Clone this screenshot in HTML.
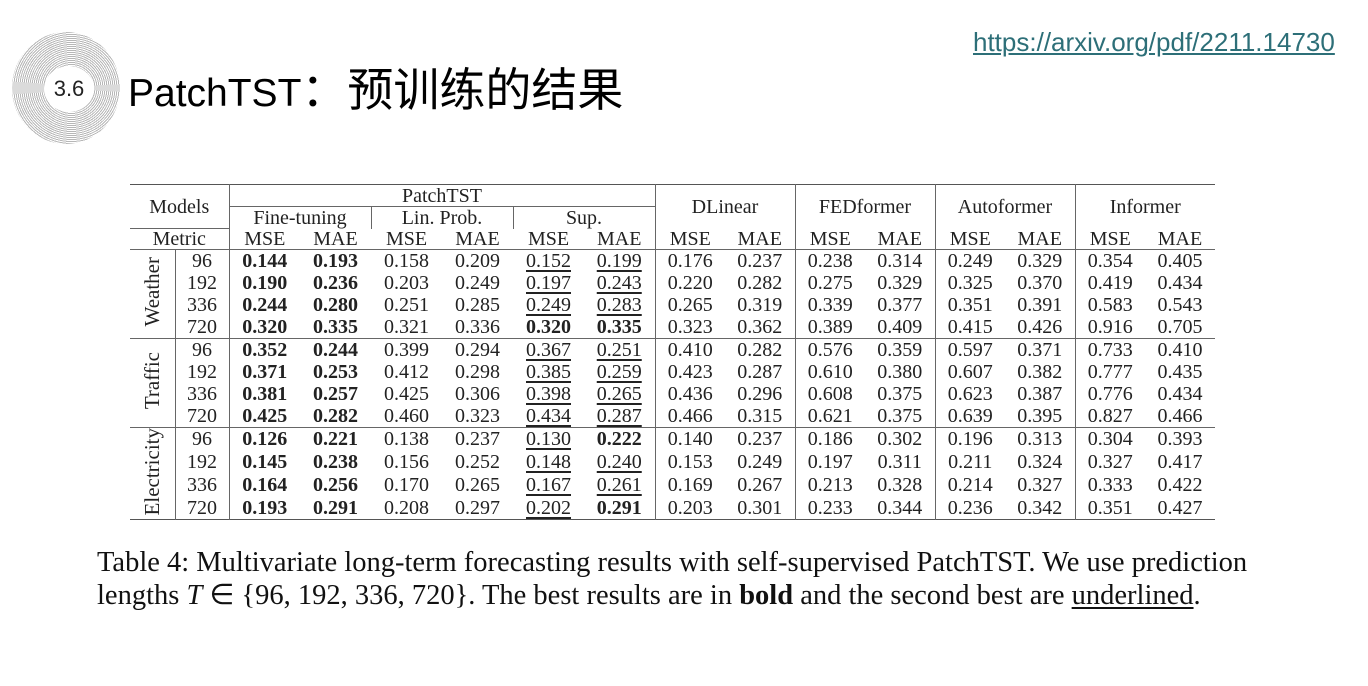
<!DOCTYPE html>
<html><head><meta charset="utf-8"><style>
*{margin:0;padding:0;box-sizing:border-box}
body{width:1368px;height:686px;background:#fff;position:relative;overflow:hidden;font-family:"Liberation Serif",serif;color:#222}
.logo{position:absolute;left:12px;top:32px;width:108px;height:112px;border-radius:50%;background:repeating-radial-gradient(circle at 55% 50%,#fff 0 1px,#aaa 1px 2px);opacity:.85}
.inner{position:absolute;left:44px;top:66px;width:50px;height:46px;border-radius:50%;background:#fff;font:22px "Liberation Sans",sans-serif;color:#222;text-align:center;line-height:46px}
.title{position:absolute;left:128px;top:54px;font:39px "Liberation Sans",sans-serif;color:#000}
.title span{font:46px "Noto Sans CJK SC",sans-serif;position:relative;top:0px}
.url{position:absolute;left:973px;top:27px;font:26px "Liberation Sans",sans-serif;color:#2d6f78;text-decoration:underline}
table{position:absolute;left:130px;top:184px;border-collapse:collapse;table-layout:fixed;font-size:20px;border-top:1.5px solid #555;border-bottom:1.5px solid #555}
td{text-align:center;padding:0;height:22.2px;line-height:20px;white-space:nowrap}
.h td{height:22px}
.m td{height:20px;border-bottom:1.5px solid #666}
.vl{border-left:1.5px solid #666}
.bt td{border-top:1.5px solid #666}
b{font-weight:bold}
u{text-decoration:underline;text-underline-offset:3px}
.rot{writing-mode:vertical-rl;transform:rotate(180deg);font-size:21px}
.cap{position:absolute;left:97px;top:546px;font-size:28.5px;line-height:33px;color:#111}
</style></head><body>
<div class="logo"></div><div class="inner">3.6</div>
<div class="title">PatchTST<span>：预训练的结果</span></div>
<div class="url">https://arxiv.org/pdf/2211.14730</div>
<table>
<colgroup><col style="width:45px"><col style="width:54px"><col span="6" style="width:71px"><col span="8" style="width:70px"></colgroup>
<tr class="h"><td colspan="2" rowspan="2" style="border-bottom:1.5px solid #666">Models</td><td colspan="6" class="vl" style="border-bottom:1px solid #666">PatchTST</td><td colspan="2" rowspan="2" class="vl">DLinear</td><td colspan="2" rowspan="2" class="vl">FEDformer</td><td colspan="2" rowspan="2" class="vl">Autoformer</td><td colspan="2" rowspan="2" class="vl">Informer</td></tr>
<tr class="h"><td colspan="2" class="vl">Fine-tuning</td><td colspan="2" class="vl">Lin. Prob.</td><td colspan="2" class="vl">Sup.</td></tr>
<tr class="m"><td colspan="2">Metric</td><td class="vl">MSE</td><td>MAE</td><td>MSE</td><td>MAE</td><td>MSE</td><td>MAE</td><td class="vl">MSE</td><td>MAE</td><td class="vl">MSE</td><td>MAE</td><td class="vl">MSE</td><td>MAE</td><td class="vl">MSE</td><td>MAE</td></tr>
<tr><td rowspan="4"><span class="rot">Weather</span></td><td class="vl">96</td><td class="vl"><b>0.144</b></td><td><b>0.193</b></td><td>0.158</td><td>0.209</td><td><u>0.152</u></td><td><u>0.199</u></td><td class="vl">0.176</td><td>0.237</td><td class="vl">0.238</td><td>0.314</td><td class="vl">0.249</td><td>0.329</td><td class="vl">0.354</td><td>0.405</td></tr>
<tr><td class="vl">192</td><td class="vl"><b>0.190</b></td><td><b>0.236</b></td><td>0.203</td><td>0.249</td><td><u>0.197</u></td><td><u>0.243</u></td><td class="vl">0.220</td><td>0.282</td><td class="vl">0.275</td><td>0.329</td><td class="vl">0.325</td><td>0.370</td><td class="vl">0.419</td><td>0.434</td></tr>
<tr><td class="vl">336</td><td class="vl"><b>0.244</b></td><td><b>0.280</b></td><td>0.251</td><td>0.285</td><td><u>0.249</u></td><td><u>0.283</u></td><td class="vl">0.265</td><td>0.319</td><td class="vl">0.339</td><td>0.377</td><td class="vl">0.351</td><td>0.391</td><td class="vl">0.583</td><td>0.543</td></tr>
<tr><td class="vl">720</td><td class="vl"><b>0.320</b></td><td><b>0.335</b></td><td>0.321</td><td>0.336</td><td><b>0.320</b></td><td><b>0.335</b></td><td class="vl">0.323</td><td>0.362</td><td class="vl">0.389</td><td>0.409</td><td class="vl">0.415</td><td>0.426</td><td class="vl">0.916</td><td>0.705</td></tr>
<tr class="bt"><td rowspan="4"><span class="rot">Traffic</span></td><td class="vl">96</td><td class="vl"><b>0.352</b></td><td><b>0.244</b></td><td>0.399</td><td>0.294</td><td><u>0.367</u></td><td><u>0.251</u></td><td class="vl">0.410</td><td>0.282</td><td class="vl">0.576</td><td>0.359</td><td class="vl">0.597</td><td>0.371</td><td class="vl">0.733</td><td>0.410</td></tr>
<tr><td class="vl">192</td><td class="vl"><b>0.371</b></td><td><b>0.253</b></td><td>0.412</td><td>0.298</td><td><u>0.385</u></td><td><u>0.259</u></td><td class="vl">0.423</td><td>0.287</td><td class="vl">0.610</td><td>0.380</td><td class="vl">0.607</td><td>0.382</td><td class="vl">0.777</td><td>0.435</td></tr>
<tr><td class="vl">336</td><td class="vl"><b>0.381</b></td><td><b>0.257</b></td><td>0.425</td><td>0.306</td><td><u>0.398</u></td><td><u>0.265</u></td><td class="vl">0.436</td><td>0.296</td><td class="vl">0.608</td><td>0.375</td><td class="vl">0.623</td><td>0.387</td><td class="vl">0.776</td><td>0.434</td></tr>
<tr><td class="vl">720</td><td class="vl"><b>0.425</b></td><td><b>0.282</b></td><td>0.460</td><td>0.323</td><td><u>0.434</u></td><td><u>0.287</u></td><td class="vl">0.466</td><td>0.315</td><td class="vl">0.621</td><td>0.375</td><td class="vl">0.639</td><td>0.395</td><td class="vl">0.827</td><td>0.466</td></tr>
<tr class="bt"><td rowspan="4"><span class="rot">Electricity</span></td><td class="vl">96</td><td class="vl"><b>0.126</b></td><td><b>0.221</b></td><td>0.138</td><td>0.237</td><td><u>0.130</u></td><td><b>0.222</b></td><td class="vl">0.140</td><td>0.237</td><td class="vl">0.186</td><td>0.302</td><td class="vl">0.196</td><td>0.313</td><td class="vl">0.304</td><td>0.393</td></tr>
<tr><td class="vl">192</td><td class="vl"><b>0.145</b></td><td><b>0.238</b></td><td>0.156</td><td>0.252</td><td><u>0.148</u></td><td><u>0.240</u></td><td class="vl">0.153</td><td>0.249</td><td class="vl">0.197</td><td>0.311</td><td class="vl">0.211</td><td>0.324</td><td class="vl">0.327</td><td>0.417</td></tr>
<tr><td class="vl">336</td><td class="vl"><b>0.164</b></td><td><b>0.256</b></td><td>0.170</td><td>0.265</td><td><u>0.167</u></td><td><u>0.261</u></td><td class="vl">0.169</td><td>0.267</td><td class="vl">0.213</td><td>0.328</td><td class="vl">0.214</td><td>0.327</td><td class="vl">0.333</td><td>0.422</td></tr>
<tr><td class="vl">720</td><td class="vl"><b>0.193</b></td><td><b>0.291</b></td><td>0.208</td><td>0.297</td><td><u>0.202</u></td><td><b>0.291</b></td><td class="vl">0.203</td><td>0.301</td><td class="vl">0.233</td><td>0.344</td><td class="vl">0.236</td><td>0.342</td><td class="vl">0.351</td><td>0.427</td></tr>
</table>
<div class="cap">Table 4: Multivariate long-term forecasting results with self-supervised PatchTST. We use prediction<br>lengths <i>T</i> ∈ {96, 192, 336, 720}. The best results are in <b>bold</b> and the second best are <u>underlined</u>.</div>
</body></html>
